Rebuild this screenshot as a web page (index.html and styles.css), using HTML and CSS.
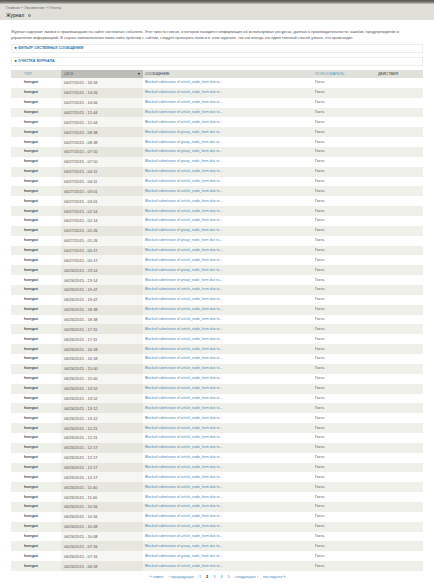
FILE: index.html
```html
<!DOCTYPE html>
<html lang="ru">
<head>
<meta charset="utf-8">
<title>Журнал</title>
<link rel="stylesheet" href="styles.css">
</head>
<body>
<header class="top">
  <nav class="crumbs"><a href="#">Главная</a> » <a href="#">Управление</a> » <a href="#">Отчеты</a></nav>
  <h1 class="title">Журнал <svg class="gear" viewBox="0 0 10 10"><circle cx="5" cy="5" r="3.2" fill="none" stroke="#444" stroke-width="2.2"/></svg></h1>
</header>
<main class="content">
  <p class="intro">Журнал содержит записи о произошедших на сайте системных событиях. Этот просто список, в котором находится информация об используемых ресурсах, данных о производительности, ошибки, предупреждение и управление информацией. В случае возникновения каких-либо проблем с сайтом, следует проверить записи в этом журнале, так как иногда это единственный способ узнать, что происходит.</p>
  <section class="box"><a class="box-link" href="#">Фильтр системных сообщений</a></section>
  <section class="box"><a class="box-link" href="#">Очистка журнала</a></section>
  <table class="log">
    <colgroup><col class="c1"><col class="c2"><col class="c3"><col class="c4"><col class="c5"></colgroup>
    <thead>
      <tr>
        <th class="th-type"><a href="#">Тип</a></th>
        <th class="th-date"><a href="#">Дата</a><span class="arrow"></span></th>
        <th class="th-msg">Сообщение</th>
        <th class="th-user"><a href="#">Пользователь</a></th>
        <th class="th-act">Действия</th>
      </tr>
    </thead>
    <tbody id="rows"></tbody>
  </table>
  <nav class="pager">
    <a href="#">« новее</a>
    <a href="#">‹ предыдущая</a>
    <span class="nums"><a href="#">1</a><b>2</b><a href="#">3</a><a href="#">4</a><a href="#">5</a></span>
    <a href="#">следующая ›</a>
    <a href="#">последняя »</a>
  </nav>
</main>
<script src="rows.js"></script>
</body>
</html>
```
FILE: rows.js
```js
var data = [
"27 16:34 a","27 14:06 a","27 14:06 a","27 12:44 a","27 12:44 a","27 08:38 g","27 08:38 g","27 07:50 g","27 07:50 g","27 04:11 a",
"27 04:11 a","27 03:01 a","27 03:01 a","27 02:14 a","27 02:14 a","27 01:26 g","27 01:26 g","27 00:17 a","27 00:17 a","26 23:14 g",
"26 23:14 g","26 19:47 a","26 19:47 a","26 18:38 a","26 18:38 a","26 17:11 a","26 17:11 a","26 16:18 a","26 16:18 a","26 15:00 a",
"26 15:00 a","26 13:52 a","26 13:52 a","26 13:12 a","26 13:12 a","26 12:21 a","26 12:21 a","26 12:17 a","26 12:17 a","26 12:17 a",
"26 12:17 a","26 11:40 a","26 11:40 a","26 10:56 a","26 10:56 a","26 10:08 a","26 10:08 a","26 07:16 g","26 07:16 g","26 06:58 a"
];
var html = "";
data.forEach(function (d) {
  var p = d.split(" ");
  var form = p[2] === "g" ? "group" : "article";
  html += "<tr><td class=\"type\">honeypot</td><td class=\"date\">06/" + p[0] + "/2015 - " + p[1] +
    "</td><td class=\"msg\"><a href=\"#\">Blocked submission of " + form + "_node_form due to...</a></td><td>Гость</td><td></td></tr>";
});
document.getElementById("rows").innerHTML = html;
```
FILE: styles.css
```css
html, body { margin: 0; padding: 0; background: #fff; }
body {
  width: 434px;
  height: 583px;
  overflow: hidden;
  font-family: "Liberation Sans", Arial, sans-serif;
  font-size: 3.8px;
  color: #333;
}
a { color: #0074bd; text-decoration: none; }

.top {
  box-sizing: border-box;
  height: 20px;
  padding: 6px 6px 0;
  background: linear-gradient(#55554f 0, #77776f 2px, #e0e0d8 4.5px, #e0e0d8 100%);
}
.crumbs { font-size: 3.7px; line-height: 5px; color: #777; }
.crumbs a { color: #667; }
.title {
  display: flex;
  align-items: center;
  gap: 4px;
  margin: 1px 0 0;
  font-size: 5px;
  line-height: 7px;
  font-weight: normal;
  color: #222;
}
.gear { width: 3px; height: 3px; }

.content { padding: 9px 11px 0; }
.intro { margin: 0 21px 0 0; line-height: 6.2px; color: #555; font-size: 3.85px; }

.box {
  box-sizing: border-box;
  height: 9px;
  margin-top: 4px;
  padding-left: 3px;
  border: 1px solid #eeeee8;
  line-height: 6.5px;
}
.intro + .box { margin-top: 2.6px; }
.box-link { font-weight: bold; font-size: 3.6px; text-transform: uppercase; color: #2a78ad; }
.box-link::before { content: "▸ "; color: #333; }

.log {
  width: 412px;
  margin-top: 4px;
  border-collapse: collapse;
  table-layout: fixed;
}
.c1 { width: 50px; }
.c2 { width: 82px; }
.c3 { width: 170px; }
.c4 { width: 63px; }
.log th {
  height: 8px;
  padding: 0 0 0 2px;
  background: #e1e2dc;
  text-align: left;
  font-weight: normal;
  font-size: 3.7px;
  text-transform: uppercase;
  color: #333;
}
.log th.th-type { padding-left: 13px; }
.log th.th-date { position: relative; background: #bdbdb7; padding-left: 3px; }
.log th a { color: #5f94b8; }
.log th.th-date a { color: #777; }
.arrow {
  position: absolute;
  right: 3px;
  top: 3px;
  border: 1.5px solid transparent;
  border-top: 2px solid #222;
  border-bottom: 0;
}
.log td {
  height: 9.86px;
  padding: 0 0 0 2px;
  line-height: 5px;
  white-space: nowrap;
  overflow: hidden;
  color: #555;
  font-size: 3.8px;
}
.log tbody tr:nth-child(even) td { background: #f0f0ea; }
.log td.type { padding-left: 13px; font-weight: bold; color: #444; font-size: 3.1px; }
.log td.date { padding-left: 3px; background: #f6f6f2; font-size: 4px; }
.log tbody tr:nth-child(even) td.date { background: #e7e7df; }
.log td.msg { font-size: 3.5px; }
.log td a { color: #4a8dba; }

.pager {
  display: flex;
  justify-content: center;
  gap: 5px;
  margin-top: 3px;
  line-height: 5px;
  font-size: 3.9px;
  padding-left: 1px;
}
.pager a { color: #4a8dba; }
.nums { display: flex; gap: 5px; }
.nums b { color: #222; }
```
